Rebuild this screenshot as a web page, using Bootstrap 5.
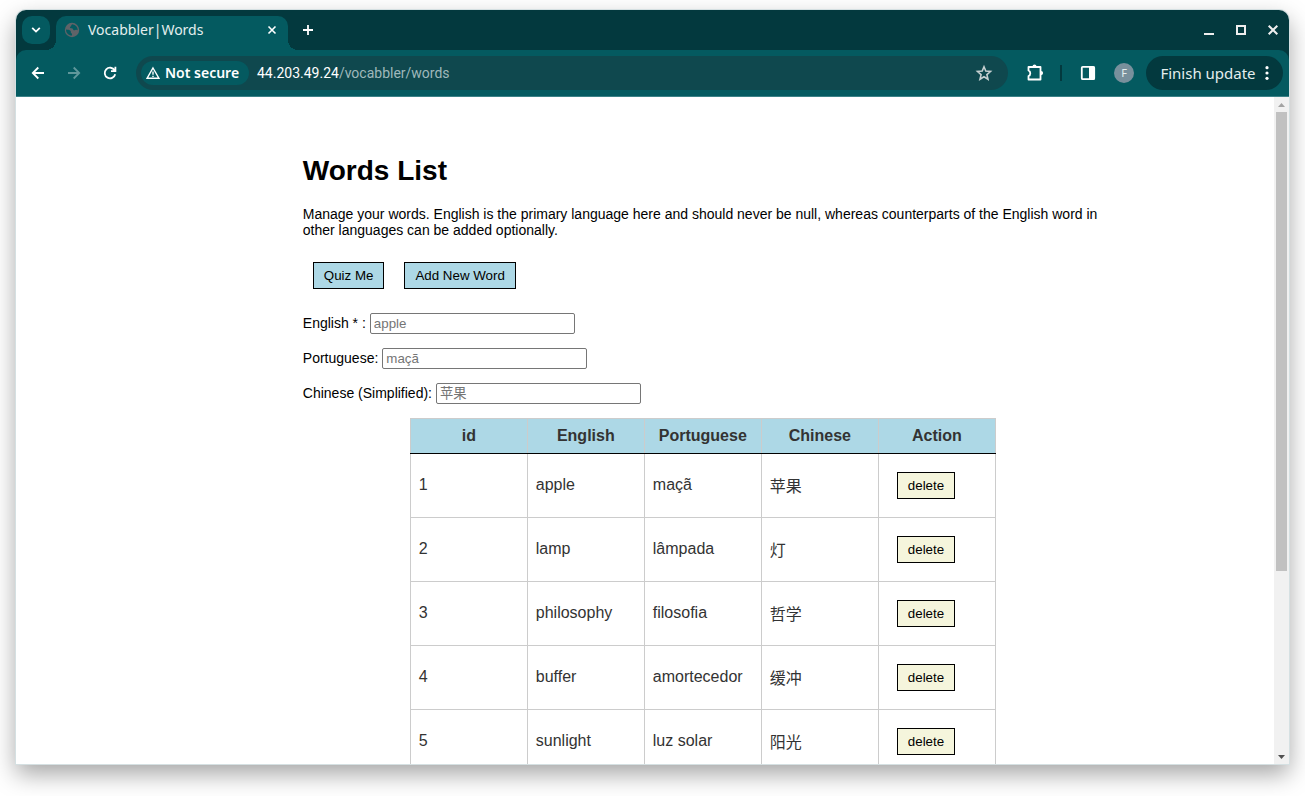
<!DOCTYPE html>
<html lang="en">
<head>
<meta charset="utf-8">
<meta name="viewport" content="width=device-width, initial-scale=1">
<title>Vocabbler|Words</title>
<link href="https://cdn.jsdelivr.net/npm/bootstrap@5.3.0/dist/css/bootstrap.min.css" rel="stylesheet">
<style>
:root { --frame: #03393e; --bar: #045a60; --omni: #0f484e; }
body { padding: 10px 16px 32px; background: #fff; font-family: "Liberation Sans", "Noto Sans CJK SC", sans-serif; color: #000; }
svg { display: block; flex: none; }
.browser { border-radius: 10px 10px 0 0; box-shadow: 0 0 0 1px #d5e0e2, 0 10px 24px rgba(0,0,0,.36); background: #fff; }
.chrome-ui { font-family: "Noto Sans", sans-serif; font-size: 14px; line-height: 20px; color: #e3eeee; }
.chrome-ui button { background: none; border: 0; padding: 0; color: inherit; display: flex; align-items: center; justify-content: center; flex: none; }
.tabstrip { background: var(--frame); height: 40px; padding: 6px 8px 0 6px; border-radius: 10px 10px 0 0; }
.chrome-ui .tab-search { width: 28px; height: 28px; border-radius: 10px; background: var(--bar); margin-right: 6px; }
.page-tab { position: relative; width: 232px; height: 34px; padding: 0 8px 6px; border-radius: 10px 10px 0 0; background: var(--bar); }
.page-tab::before, .page-tab::after { content: ""; position: absolute; bottom: 0; width: 10px; height: 10px; }
.page-tab::before { left: -10px; background: radial-gradient(circle at 0 0, transparent 10px, var(--bar) 10px); }
.page-tab::after { right: -10px; background: radial-gradient(circle at 100% 0, transparent 10px, var(--bar) 10px); }
.chrome-ui .new-tab { width: 24px; height: 28px; }
.window-buttons { height: 28px; }
.toolbar-wrap { background: var(--frame); }
.tools { background: var(--bar); height: 47px; padding: 0 6px 1px 12px; border-radius: 10px 10px 0 0; border-bottom: 1px solid #3b8187; }
.chrome-ui .tool-btn { width: 20px; height: 20px; margin-right: 16px; }
.omnibox { background: var(--omni); height: 34px; border-radius: 17px; padding: 0 14px 0 5px; margin-right: 17px; }
.chrome-ui .chip { background: var(--bar); height: 24px; width: 108px; padding-left: 5px; border-radius: 12px; gap: 5px; font-weight: 600; color: #fff; margin-right: 8px; justify-content: flex-start; }
.url { font-family: Roboto, sans-serif; font-size: 14px; }
.url-path { color: #9fb8bb; }
.chrome-ui .avatar { width: 20px; height: 20px; border-radius: 50%; background: #78909c; font-size: 11px; margin-right: 12px; }
.chrome-ui .update { background: var(--frame); width: 137px; height: 34px; border-radius: 17px; gap: 9px; font-size: 15px; }
.divider { width: 2px; height: 16px; background: var(--frame); margin: 0 16px 0 15px; }
.page-body { max-width: 800px; margin-left: 22.8%; padding-top: 58px; font-size: 14px; line-height: 16px; }
.page-body h1 { font-size: 28px; line-height: 32px; font-weight: 700; margin: 0 0 19px; }
.page-body p { margin: 0 0 14px; }
.box-btn { font-size: revert; line-height: 15px; padding: 5px 10px; margin: 10px; border: 1px solid #000; border-radius: 0; color: #000; background: lightblue; }
.box-btn.delete { background: beige; }
.field { margin-top: 14px; gap: 4px; }
.field label { padding-bottom: 2px; }
.field input { font-size: revert; line-height: 15px; width: 205px; height: 21px; padding: 2px 3px; border: 1px solid #767676; border-radius: 2px; }
.field input::placeholder { color: #757575; }
.words { table-layout: fixed; width: 586px; margin: 14px auto 0; font-size: 16px; line-height: 18px; color: #333; border-collapse: collapse; }
.words th, .words td { border: 1px solid #ccc; padding: 8px; vertical-align: middle; }
.words th { background: lightblue padding-box; text-align: center; border-bottom-color: #000; }
.words td { padding: 7px 8px 9px; height: 64px; }
.words td:lang(zh) { padding: 9px 8px 7px; }
.words td:last-child { padding: 8px; }
.scroller { width: 15px; background: #f1f1f1; flex: none; }
.arrow-box { height: 15px; }
.thumb { width: 11px; margin: 0 auto; background: #c1c1c1; }
</style>
</head>
<body class="vh-100 overflow-hidden">
<div class="browser d-flex flex-column h-100">
  <header class="chrome-ui">
    <div class="tabstrip d-flex">
      <button class="tab-search" aria-label="Search tabs"><svg width="10" height="8" viewBox="0 0 10 8" fill="none" stroke="#fff" stroke-width="1.8"><path d="M1.2 1.8 5 5.6 8.800 1.800"/></svg></button>
      <div class="page-tab d-flex align-items-center">
        <svg width="16" height="16" viewBox="0 0 16 16"><circle cx="8" cy="8" r="7.200" fill="#5f6368"/><path fill="#045a60" d="M2 7.500c2 .2 3.500.3 4.500 1.300.8.900-.1 1.900.7 2.300.9.400.9 1.400.8 2.400-3.500 0-6-2.500-6-6zM8.300 2.300c-1.800 1-.6 1.900-2 2.500-.8.400-.3 1.500.8 1.400 1.200-.1 1.700.3 2 1.200.4 1.100 1.500 1 2.200.6.800-.5 1.700-.3 2.500.2-.2-3-2-5.200-5.500-5.900z"/></svg>
        <span class="ms-2 flex-grow-1">Vocabbler|Words</span>
        <button aria-label="Close tab"><svg width="16" height="16" viewBox="0 0 16 16" stroke="#fff" stroke-width="1.600"><path d="m4.500 4.500 7 7m0-7-7 7"/></svg></button>
      </div>
      <button class="new-tab ms-2" aria-label="New tab"><svg width="12" height="12" viewBox="0 0 12 12" stroke="#fff" stroke-width="1.800"><path d="M6 1v10M1 6h10"/></svg></button>
      <div class="window-buttons d-flex ms-auto align-items-center gap-3">
        <button aria-label="Minimize"><svg width="16" height="16" viewBox="0 0 16 16"><path fill="#eee" d="M3 11h10v2H3z"/></svg></button>
        <button aria-label="Maximize"><svg width="16" height="16" viewBox="0 0 16 16" fill="none" stroke="#eee" stroke-width="2"><path d="M4 4h8v8H4z"/></svg></button>
        <button aria-label="Close"><svg width="16" height="16" viewBox="0 0 16 16" stroke="#eee" stroke-width="2"><path d="m3.700 3.700 8.600 8.600m0-8.600-8.600 8.600"/></svg></button>
      </div>
    </div>
    <div class="toolbar-wrap">
      <div class="tools d-flex align-items-center">
        <button class="tool-btn" aria-label="Back"><svg width="16" height="16" viewBox="0 0 16 16" fill="none" stroke="#fff" stroke-width="1.800"><path d="M14 8H3m5.300-5.500L2.800 8l5.500 5.500"/></svg></button>
        <button class="tool-btn" aria-label="Forward"><svg width="16" height="16" viewBox="0 0 16 16" fill="none" stroke="#5f979b" stroke-width="1.800"><path d="M2 8h11M7.700 2.500 13.200 8l-5.500 5.500"/></svg></button>
        <button class="tool-btn" aria-label="Reload"><svg width="16" height="16" viewBox="0 0 16 16" fill="none" stroke="#fff" stroke-width="1.800"><path d="M13.200 9.200A5.300 5.300 0 1 1 12.600 5.300M13.400 1.800v4.300H9"/></svg></button>
        <div class="omnibox d-flex align-items-center flex-grow-1">
          <button class="chip"><svg width="14" height="14" viewBox="0 0 14 14" fill="none" stroke="#fff" stroke-width="1.400"><path d="M7 2 13 12.300H1zM7 5.500v3.300m0 1v1.300"/></svg>Not secure</button>
          <span class="url text-nowrap flex-grow-1"><span class="text-white">44.203.49.24</span><span class="url-path">/vocabbler/words</span></span>
          <button aria-label="Bookmark"><svg width="20" height="20" viewBox="0 0 20 20" fill="none" stroke="#c5cfd0" stroke-width="1.600"><path d="m10 3.800 1.800 4.300 4.700.4-3.600 3.100 1.100 4.600-4-2.500-4 2.500 1.100-4.600-3.600-3.100 4.700-.4z"/></svg></button>
        </div>
        <button aria-label="Extensions"><svg width="20" height="20" viewBox="0 0 20 20"><path fill="none" stroke="#fff" stroke-width="1.800" stroke-linejoin="round" d="M3.500 4h12v12.500h-12v-3.300c2.400-.9 2.400-4.800 0-5.700z"/><path fill="#fff" d="M7.500 3.500a2 2 0 0 1 4 0zM16 8a2 2 0 0 1 0 4.200z"/></svg></button>
        <span class="divider"></span>
        <button class="tool-btn" aria-label="Side panel"><svg width="16" height="16" viewBox="0 0 16 16"><rect x="1.800" y="1.800" width="12.400" height="12.400" rx="1" fill="none" stroke="#fff" stroke-width="1.800"/><path fill="#fff" d="M9 1.500h5.500v13H9z"/></svg></button>
        <button class="avatar" aria-label="Profile F">F</button>
        <button class="update">Finish update <svg width="4" height="16" viewBox="0 0 4 16" fill="#fff"><circle cx="2" cy="2.700" r="1.600"/><circle cx="2" cy="8" r="1.600"/><circle cx="2" cy="13.300" r="1.600"/></svg></button>
      </div>
    </div>
  </header>
  <div class="d-flex flex-grow-1 overflow-hidden">
    <main class="flex-grow-1">
      <div class="page-body">
        <h1>Words List</h1>
        <p>Manage your words. English is the primary language here and should never be null, whereas counterparts of the English word in other languages can be added optionally.</p>
        <div class="d-flex">
          <button class="box-btn">Quiz Me</button>
          <button class="box-btn">Add New Word</button>
        </div>
        <div class="field d-flex align-items-center"><label for="en">English * :</label><input id="en" type="text" placeholder="apple"></div>
        <div class="field d-flex align-items-center"><label for="pt">Portuguese:</label><input id="pt" type="text" placeholder="maçã"></div>
        <div class="field d-flex align-items-center"><label for="zh">Chinese (Simplified):</label><input id="zh" type="text" placeholder="苹果"></div>
        <table class="words">
          <thead><tr><th>id</th><th>English</th><th>Portuguese</th><th>Chinese</th><th>Action</th></tr></thead>
          <tbody>
            <tr><td>1</td><td>apple</td><td>maçã</td><td lang="zh">苹果</td><td><button class="box-btn delete">delete</button></td></tr>
            <tr><td>2</td><td>lamp</td><td>lâmpada</td><td lang="zh">灯</td><td><button class="box-btn delete">delete</button></td></tr>
            <tr><td>3</td><td>philosophy</td><td>filosofia</td><td lang="zh">哲学</td><td><button class="box-btn delete">delete</button></td></tr>
            <tr><td>4</td><td>buffer</td><td>amortecedor</td><td lang="zh">缓冲</td><td><button class="box-btn delete">delete</button></td></tr>
            <tr><td>5</td><td>sunlight</td><td>luz solar</td><td lang="zh">阳光</td><td><button class="box-btn delete">delete</button></td></tr>
          </tbody>
        </table>
      </div>
    </main>
    <div class="scroller d-flex flex-column" aria-hidden="true">
      <div class="arrow-box d-flex align-items-center justify-content-center"><svg width="7" height="4" viewBox="0 0 7 4"><path fill="#a3a3a3" d="M3.500 0 7 4H0z"/></svg></div>
      <div class="flex-grow-1"><div class="thumb" style="height:72%"></div></div>
      <div class="arrow-box d-flex align-items-center justify-content-center"><svg width="7" height="4" viewBox="0 0 7 4"><path fill="#505050" d="M3.500 4 7 0H0z"/></svg></div>
    </div>
  </div>
</div>
<script src="https://cdn.jsdelivr.net/npm/bootstrap@5.3.0/dist/js/bootstrap.bundle.min.js"></script>
</body>
</html>
